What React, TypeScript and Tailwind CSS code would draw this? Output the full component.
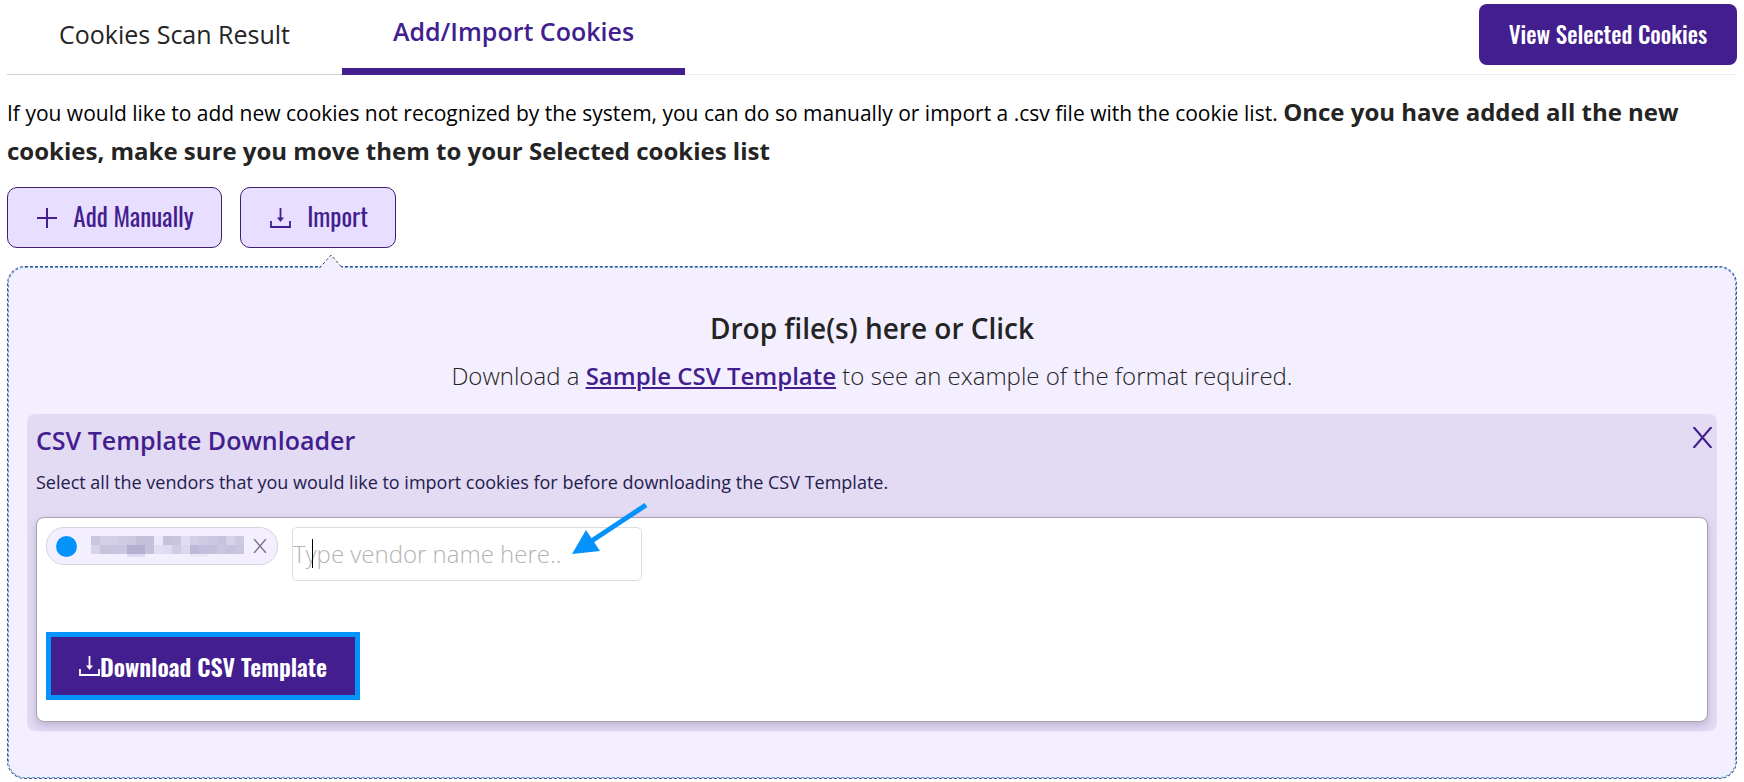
import React, { useState } from 'react';

type IconProps = { className?: string };

const DownloadIcon = ({ className }: IconProps) => (
  <svg className={className} width="21" height="20" viewBox="0 0 21 20" fill="none" stroke="currentColor" strokeWidth="2" aria-hidden="true">
    <path d="M1 13v6h19v-6" strokeWidth="1.8" />
    <path d="M10.5 0v12" strokeWidth="1.8" />
    <path d="M7 9.5h7L10.5 14z" fill="currentColor" stroke="none" />
  </svg>
);

const PlusIcon = ({ className }: IconProps) => (
  <svg className={className} width="20" height="20" viewBox="0 0 20 20" fill="none" stroke="currentColor" strokeWidth="2" aria-hidden="true">
    <path d="M10 0v20M0 10h20" />
  </svg>
);

const CrossIcon = ({ size, strokeWidth }: { size: number; strokeWidth: number }) => (
  <svg width={size} height={size} viewBox="0 0 20 20" fill="none" stroke="currentColor" strokeWidth={strokeWidth} aria-hidden="true">
    <path d="M1.5 0L18.5 20M18.5 0L1.5 20" />
  </svg>
);

// Vendor name is masked, one colour per 9px block
const maskRows = [
  ['#c9c5e0', '#d3cfe6', '#d4d0e7', '#cfcbe3', '#cdc9e1', '#c4c0db', '#c5c1dc', '#ece8fa', '#c6c2dd', '#c9c5df', '#e0dcf1', '#d3cfe7', '#cfcbe3', '#ccc8e1', '#c7c3de', '#d7d3e9', '#cdc9e2'],
  ['#d7d3e9', '#c7c3df', '#c8c4df', '#cac6e0', '#b3afd0', '#b4b0d1', '#c5c1dc', '#e2def2', '#dedaef', '#d0cce5', '#dcd8ee', '#bcb8d7', '#c2bedb', '#c3bfdb', '#cac6e0', '#c6c2dd', '#c9c5df'],
];

const MaskedName = () => (
  <svg width="153" height="22" viewBox="0 0 153 22" shapeRendering="crispEdges" role="img" aria-label="Hidden vendor">
    {maskRows.map((row, y) =>
      row.map((fill, x) => <rect key={`${x}-${y}`} x={x * 9} y={1 + y * 9} width="9" height="9" fill={fill} />)
    )}
    <rect x="36" y="19" width="18" height="3" fill="#dcd8ed" />
    <rect x="99" y="19" width="18" height="3" fill="#eae6f8" />
  </svg>
);

const App = () => {
  const [vendor, setVendor] = useState('');

  return (
    <main className="bg-white px-[7px] pb-1 font-['Open_Sans',sans-serif] text-[#242424]">
      {/* Tabs */}
      <header className="flex h-[75px] items-stretch border-b border-[#ececec]">
        <nav className="-mb-px flex" role="tablist">
          <button role="tab" aria-selected="false" className="w-[335px] border-b border-[#d0d0d0] pb-1 text-center text-[25px]">
            Cookies Scan Result
          </button>
          <button role="tab" aria-selected="true" className="w-[343px] border-b-[7px] border-[#421e8f] pb-1 text-center text-[25px] font-semibold text-[#421e8f]">
            Add/Import Cookies
          </button>
        </nav>
        <button className="mt-1 ml-auto h-[61px] w-[258px] rounded-lg bg-[#421e8f] font-['Oswald','Roboto_Condensed',sans-serif] text-[23px] font-medium text-white">
          View Selected Cookies
        </button>
      </header>

      <p className="pt-[18px] text-[21px] leading-[37px] text-black">
        If you would like to add new cookies not recognized by the system, you can do so manually or import a .csv file with the cookie list.{' '}
        <strong className="text-2xl leading-[37px] font-bold text-[#242424]">
          Once you have added all the new cookies, make sure you move them to your Selected cookies list
        </strong>
      </p>

      <div className="mt-4 flex gap-[18px] font-['Oswald','Roboto_Condensed',sans-serif] text-[25px] text-[#421e8f]">
        <button className="flex h-[61px] w-[215px] items-center justify-center gap-4 rounded-[10px] border border-[#421e6f] bg-[#e8deff] pl-[2px]">
          <PlusIcon />
          <span className="pb-1">Add Manually</span>
        </button>
        <button className="relative flex h-[61px] w-[156px] items-center justify-center gap-4 rounded-[10px] border border-[#421e6f] bg-[#e8deff] pl-[2px]">
          <DownloadIcon />
          <span className="pb-1">Import</span>
          {/* Pointer to the drop zone */}
          <svg className="absolute top-[66px] left-[78px] z-10" width="24" height="15" viewBox="0 0 24 15" aria-hidden="true">
            <path d="M0 15L12 1L24 15z" fill="#f4efff" />
            <path d="M0.5 14L12 1L23.5 14" fill="none" stroke="#4f4a73" strokeDasharray="3 2" />
          </svg>
        </button>
      </div>

      {/* Drop zone */}
      <section className="mt-[18px] rounded-[18px] border border-dashed border-[#4a4f80] bg-[#f4efff]">
        <div className="rounded-[17px] border border-dashed border-[#4f9fd6] px-[18px] pt-10 pb-[46px]">
          <h2 className="text-center text-[28px] leading-10 font-semibold">Drop file(s) here or Click</h2>
          <p className="mt-[10px] text-center text-2xl leading-9 font-light">
            Download a{' '}
            <a href="#template" className="font-semibold text-[#421e8f] underline decoration-2 underline-offset-2">
              Sample CSV Template
            </a>{' '}
            to see an example of the format required.
          </p>

          <div className="mt-5 rounded-lg bg-[#e3daf3] px-[9px] pb-[9px]">
            <div className="flex items-start justify-between pt-2">
              <h3 className="text-[25px] leading-9 font-semibold text-[#421e8f]">CSV Template Downloader</h3>
              <button aria-label="Close" className="-mr-[5px] pt-[5px] text-[#421e8f]">
                <CrossIcon size={21} strokeWidth={2} />
              </button>
            </div>
            <p className="mt-2 text-lg leading-8 text-[#22204e]">
              Select all the vendors that you would like to import cookies for before downloading the CSV Template.
            </p>

            <div className="mt-[19px] h-[205px] rounded-lg border border-[#a5a2ab] bg-white p-[9px] shadow-[0_4px_8px_rgba(60,40,90,0.2)]">
              <div className="flex items-start gap-[14px]">
                <div className="flex h-[38px] w-[232px] items-center rounded-[18px] border border-[#d8d3e2] bg-[#f4efff] pl-[9px]">
                  <span className="mr-[14px] size-[21px] rounded-full bg-[#0593fb]"></span>
                  <MaskedName />
                  <button aria-label="Remove vendor" className="ml-[9px] text-[#77747f]">
                    <CrossIcon size={14} strokeWidth={2} />
                  </button>
                </div>
                <div className="relative">
                  <input
                    type="text"
                    aria-label="Vendor name"
                    placeholder="Type vendor name here.."
                    value={vendor}
                    onChange={(e) => setVendor(e.target.value)}
                    className="block h-[54px] w-[350px] rounded-[5px] border border-[#dddde0] bg-white pb-[2px] text-2xl font-light placeholder:text-[#b3b3b3]"
                  />
                  {/* Text cursor */}
                  <span className="absolute top-3 left-5 h-[29px] w-px bg-black"></span>
                  {/* Callout arrow */}
                  <svg className="absolute -top-[25px] left-[280px]" width="76" height="54" viewBox="0 0 76 54" aria-hidden="true">
                    <path d="M74 3L18 40" stroke="#0593fb" strokeWidth="5" />
                    <path d="M0 52L14 28L28 49z" fill="#0593fb" />
                  </svg>
                </div>
              </div>

              <button className="mt-[51px] flex h-[68px] w-[314px] items-center justify-center border-[5px] border-[#0593fb] bg-[#421e8f] font-['Oswald','Roboto_Condensed',sans-serif] text-2xl font-semibold text-white">
                <DownloadIcon />
                <span className="pb-px">Download CSV Template</span>
              </button>
            </div>
          </div>
        </div>
      </section>
    </main>
  );
};

export default App;
